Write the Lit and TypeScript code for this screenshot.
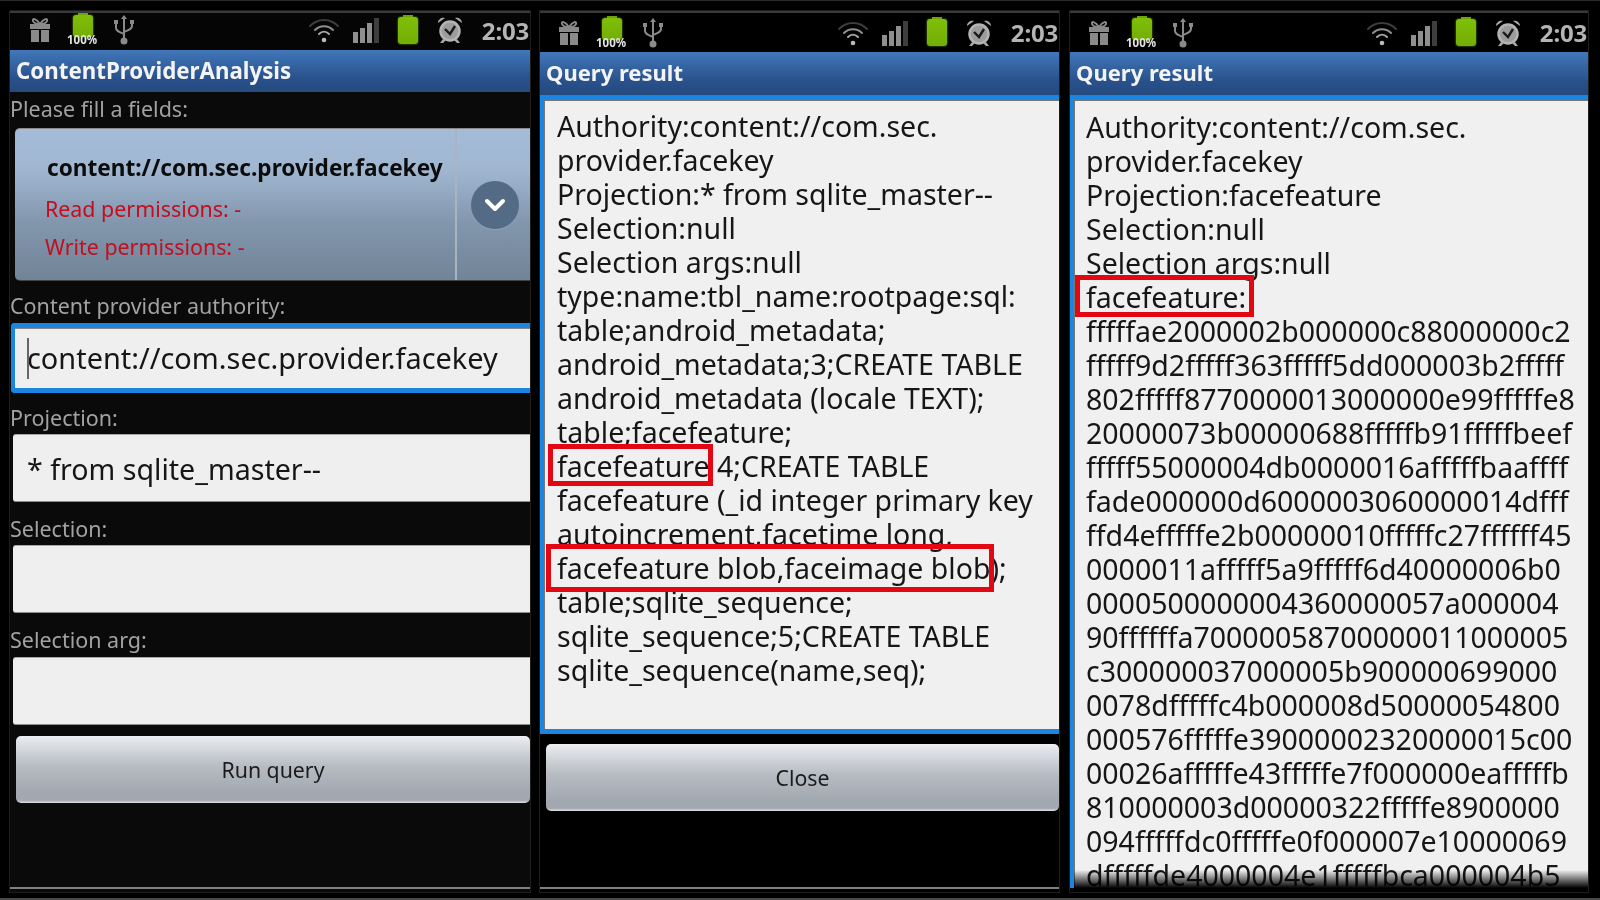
import { LitElement, html, css } from "lit";
import { customElement } from "lit/decorators.js";

const statusIcons = html`
  <div class="left-icons">
    <svg class="ic gift" width="24" height="28" viewBox="0 0 24 28"><path fill="#8a8a8a" d="M2 8h20v5H2zM3 14h8v12H3zM13 14h8v12h-8z"/><path fill="none" stroke="#8a8a8a" stroke-width="2" d="M12 8C8 2 4 2 5 5s4 3 7 3c3 0 6 0 7-3s-3-3-7 3z"/></svg>
    <div class="batt-wrap">
      <div class="batt small"></div>
      <span class="pct">100%</span>
    </div>
    <svg class="ic usb" width="20" height="30" viewBox="0 0 20 30"><g fill="none" stroke="#8a8a8a" stroke-width="2"><path d="M10 2v22M2 8v5c0 3 3 4 8 6M18 8v3c0 3-3 4-8 6"/></g><path fill="#8a8a8a" d="M10 0l3 4H7zM0 5h4v4H0zM16 5h4v4h-4z"/><circle cx="10" cy="26" r="3.5" fill="#8a8a8a"/></svg>
  </div>
  <div class="right-icons">
    <svg class="ic wifi" width="32" height="26" viewBox="0 0 32 26"><g fill="none" stroke-linecap="round"><path stroke="#3d3d3d" stroke-width="2" d="M2 9c8-8 20-8 28 0"/><path stroke="#8f8f8f" stroke-width="2" d="M7 13c5-5 13-5 18 0"/><path stroke="#a8a8a8" stroke-width="2" d="M11 17c3-3 7-3 10 0"/></g><circle cx="16" cy="23" r="2.3" fill="#bbb"/></svg>
    <svg class="ic bars" width="26" height="26" viewBox="0 0 26 26"><path fill="#8f8f8f" d="M0 15h5v11H0zM7 11h5v15H7zM14 6h5v20h-5z"/><path fill="#3e3e3e" d="M21 1h5v25h-5z"/></svg>
    <div class="batt"></div>
    <svg class="ic clock" width="26" height="28" viewBox="0 0 26 28"><circle cx="13" cy="15" r="9.5" fill="#9c9c9c" stroke="#b4b4b4" stroke-width="2.5"/><path fill="none" stroke="#1a1a1a" stroke-width="2.4" d="M8 13l5 5 5-8"/><path fill="#a8a8a8" d="M1 7c0-4 4-6 7-5zM25 7c0-4-4-6-7-5zM6 23l-3 4h3l3-3zM20 23l3 4h-3l-3-3z"/></svg>
    <span class="time">2:03</span>
  </div>
`;

const resultA = [
  "Authority:content://com.sec.",
  "provider.facekey",
  "Projection:* from sqlite_master--",
  "Selection:null",
  "Selection args:null",
  "type:name:tbl_name:rootpage:sql:",
  "table;android_metadata;",
  "android_metadata;3;CREATE TABLE",
  "android_metadata (locale TEXT);",
  "table;facefeature;",
  "facefeature 4;CREATE TABLE",
  "facefeature (_id integer primary key",
  "autoincrement,facetime long,",
  "facefeature blob,faceimage blob);",
  "table;sqlite_sequence;",
  "sqlite_sequence;5;CREATE TABLE",
  "sqlite_sequence(name,seq);",
];

const resultB = [
  "Authority:content://com.sec.",
  "provider.facekey",
  "Projection:facefeature",
  "Selection:null",
  "Selection args:null",
  "facefeature:",
  "fffffae2000002b000000c88000000c2",
  "fffff9d2fffff363fffff5dd000003b2fffff",
  "802fffff8770000013000000e99fffffe8",
  "20000073b00000688fffffb91fffffbeef",
  "fffff55000004db0000016afffffbaaffff",
  "fade000000d6000003060000014dfff",
  "ffd4efffffe2b00000010fffffc27ffffff45",
  "0000011afffff5a9fffff6d40000006b0",
  "0000500000004360000057a000004",
  "90ffffffa70000058700000011000005",
  "c300000037000005b900000699000",
  "0078dfffffc4b000008d50000054800",
  "000576fffffe39000002320000015c00",
  "00026afffffe43fffffe7f000000eafffffb",
  "810000003d00000322fffffe8900000",
  "094fffffdc0fffffe0f000007e10000069",
  "dfffffde4000004e1fffffbca000004b5",
];

@customElement("app-root")
export class AppRoot extends LitElement {
  static styles = css`
    :host {
      display: block;
      width: 1600px;
      height: 900px;
      overflow: hidden;
      background: #000;
      font-family: "Noto Sans", "Open Sans", sans-serif;
      filter: blur(0.45px);
    }
    .screen {
      box-sizing: border-box;
      height: 900px;
      padding: 10px 0 0 10px;
      display: grid;
      grid-template-columns: 520px 519px 519px;
      column-gap: 10px;
      border-top: 1px solid #2a2a2a;
      border-bottom: 2px solid #4a4a4a;
    }
    .phone {
      position: relative;
      height: 879px;
      background: #0a0a0a;
      border-top: 2px solid #3a3a3a;
      box-shadow: 0 0 0 1px #1e1e1e;
      display: flex;
      flex-direction: column;
      overflow: hidden;
    }
    .phone.second, .phone.third { background: #000; }
    .phone.third { margin-left: 1px; }
    .status {
      height: 34px;
      padding-bottom: 3px;
      flex: none;
      display: flex;
      align-items: center;
      justify-content: space-between;
      background: #050505;
    }
    .second .status, .third .status {
      height: 39px;
      padding-bottom: 0;
      background: #000;
    }
    .left-icons {
      display: flex;
      align-items: center;
      padding-left: 18px;
    }
    .second .left-icons, .third .left-icons { padding-left: 17px; }
    .gift { margin-right: 21px; }
    .usb { margin-left: 21px; }
    .batt-wrap {
      position: relative;
      width: 20px;
      height: 30px;
    }
    .batt {
      width: 20px;
      height: 27px;
      border-radius: 3px;
      background: linear-gradient(#7fbe08, #73ae06);
      box-shadow: 0 0 2px #79b806;
      position: relative;
    }
    .batt::before {
      content: "";
      position: absolute;
      left: 5px;
      top: -2px;
      width: 10px;
      height: 2px;
      background: #6da505;
    }
    .batt.small { height: 22px; }
    .pct {
      position: absolute;
      left: -6px;
      top: 19px;
      font-size: 11.5px;
      line-height: 12px;
      font-weight: 700;
      color: #e4e4e4;
    }
    .right-icons {
      display: flex;
      align-items: center;
      gap: 19px;
      padding-right: 1px;
    }
    .wifi { margin-right: -6px; }
    .time {
      font-size: 24px;
      color: #b4b4b4;
      font-weight: 700;
      letter-spacing: -0.2px;
    }
    .title {
      flex: none;
      background: linear-gradient(#4177b9, #28508a 70%, #254a7e);
      color: #f4f4f4;
      font-size: 22.3px;
      font-weight: 700;
      line-height: 42px;
      height: 42px;
      padding-left: 6px;
    }
    .second .title, .third .title {
      height: 43px;
      line-height: 41px;
      font-size: 22px;
    }
    .lab {
      color: #a2a2a2;
      font-size: 21.5px;
      line-height: 34px;
      height: 36px;
      flex: none;
      white-space: nowrap;
    }
    .lab-auth { margin-top: 8px; height: 34px; }
    .lab-proj { margin-top: 8px; height: 33px; }
    .lab-sel { margin-top: 10px; height: 33px; }
    .lab-arg { margin-top: 10px; height: 34px; }
    .spinner {
      flex: none;
      box-sizing: border-box;
      margin-left: 5px;
      height: 153px;
      border-radius: 5px 0 0 5px;
      background: linear-gradient(#a4bcd9 0%, #a0b6d0 28%, #8296ad 62%, #718497 100%);
      border-top: 1px solid #8b8b8b;
      border-bottom: 1px solid #444;
      display: flex;
    }
    .spin-text {
      width: 442px;
      flex: none;
      box-sizing: border-box;
      border-right: 2px solid #a8b4c2;
      padding: 23px 0 0 30px;
      white-space: nowrap;
    }
    .spin-main {
      font-size: 22.6px;
      font-weight: 700;
      color: #0c0c0c;
      line-height: 32px;
      padding-left: 2px;
    }
    .spin-perm {
      color: #c40d1e;
      font-size: 21.4px;
      line-height: 38px;
    }
    .spin-perm.read { margin-top: 6px; }
    .spin-arrow {
      flex: 1;
      display: flex;
      align-items: center;
      justify-content: center;
    }
    .circle {
      width: 48px;
      height: 48px;
      border-radius: 50%;
      background: #546b86;
      box-shadow: 0 1px 2px #8ea1b6;
      display: flex;
      align-items: center;
      justify-content: center;
      margin-left: 2px;
    }
    .input {
      flex: none;
      box-sizing: border-box;
      margin-left: 3px;
      background: #efefef;
      border-radius: 3px 0 0 3px;
      border-top: 1px solid #a8a8a8;
      border-bottom: 1px solid #8d8d8d;
      height: 68px;
      color: #161616;
      font-size: 28.6px;
      line-height: 67px;
      padding-left: 14px;
      white-space: nowrap;
    }
    .input.focus {
      height: 70px;
      margin-left: 1px;
      border: 0 solid #1a86e2;
      border-width: 5px 0 5px 4px;
      border-radius: 4px 0 0 4px;
      font-size: 28.9px;
      line-height: 60px;
      padding-left: 12px;
      box-shadow: inset 0 1px 0 #888;
      position: relative;
    }
    .caret {
      position: absolute;
      left: 12px;
      top: 10px;
      width: 1.5px;
      height: 41px;
      background: #666;
    }
    .run {
      flex: none;
      box-sizing: border-box;
      margin: 11px 0 0 6px;
      height: 67px;
      border-radius: 5px;
      background: linear-gradient(#eef1f4 0%, #dfe2e6 10%, #b7bcc3 45%, #a2a8b0 85%, #a4a9b0 96%, #e0e2e4 100%);
      color: #1b1b1b;
      font-size: 21.3px;
      text-align: center;
      line-height: 68px;
    }
    .run.close { margin-top: 10px; }
    .result {
      flex: none;
      box-sizing: border-box;
      height: 639px;
      background: #f0f0f0;
      border: 0 solid #1a86e2;
      border-width: 5px 0 5px 4px;
      box-shadow: inset 1px 1px 0 #777;
      padding: 9px 0 0 13px;
      color: #161616;
      font-size: 28.5px;
      white-space: nowrap;
      position: relative;
    }
    .third .result {
      height: 793px;
      padding: 10px 0 0 12px;
      border-bottom: 0;
      overflow: hidden;
    }
    .third .result::after {
      content: "";
      position: absolute;
      left: -4px;
      right: 0;
      bottom: 0;
      height: 18px;
      background: linear-gradient(rgba(0, 0, 0, 0), #000);
    }
    .ln { height: 34px; line-height: 34px; }
    .mark {
      position: absolute;
      box-sizing: border-box;
      border: 5px solid #e30613;
    }
    .m1 { left: 8px; top: 431px; width: 165px; height: 42px; }
    .m2 { left: 6px; top: 531px; width: 448px; height: 48px; }
    .m3 { left: 5px; top: 262px; width: 179px; height: 42px; }
    .foot {
      position: absolute;
      left: 0;
      right: 0;
      top: 874px;
      height: 2px;
      background: #808080;
    }
  `;

  private form() {
    return html`
      <div class="phone first">
        <div class="status">${statusIcons}</div>
        <div class="title">ContentProviderAnalysis</div>
        <div class="lab">Please fill a fields:</div>
        <div class="spinner">
          <div class="spin-text">
            <div class="spin-main">content://com.sec.provider.facekey</div>
            <div class="spin-perm read">Read permissions: -</div>
            <div class="spin-perm">Write permissions: -</div>
          </div>
          <div class="spin-arrow">
            <div class="circle">
              <svg width="24" height="16" viewBox="0 0 24 16"><path fill="none" stroke="#fff" stroke-width="4" stroke-linecap="round" stroke-linejoin="round" d="M4 4l8 8 8-8"/></svg>
            </div>
          </div>
        </div>
        <div class="lab lab-auth">Content provider authority:</div>
        <div class="input focus"><span class="caret"></span>content://com.sec.provider.facekey</div>
        <div class="lab lab-proj">Projection:</div>
        <div class="input">* from sqlite_master--</div>
        <div class="lab lab-sel">Selection:</div>
        <div class="input"></div>
        <div class="lab lab-arg">Selection arg:</div>
        <div class="input"></div>
        <div class="run">Run query</div>
        <div class="foot"></div>
      </div>
    `;
  }

  render() {
    return html`
      <div class="screen">
        ${this.form()}
        <div class="phone second">
          <div class="status">${statusIcons}</div>
          <div class="title">Query result</div>
          <div class="result">
            ${resultA.map((l) => html`<div class="ln">${l}</div>`)}
          </div>
          <div class="run close">Close</div>
          <div class="mark m1"></div>
          <div class="mark m2"></div>
          <div class="foot"></div>
        </div>
        <div class="phone third">
          <div class="status">${statusIcons}</div>
          <div class="title">Query result</div>
          <div class="result">
            ${resultB.map((l) => html`<div class="ln">${l}</div>`)}
          </div>
          <div class="mark m3"></div>
        </div>
      </div>
    `;
  }
}
